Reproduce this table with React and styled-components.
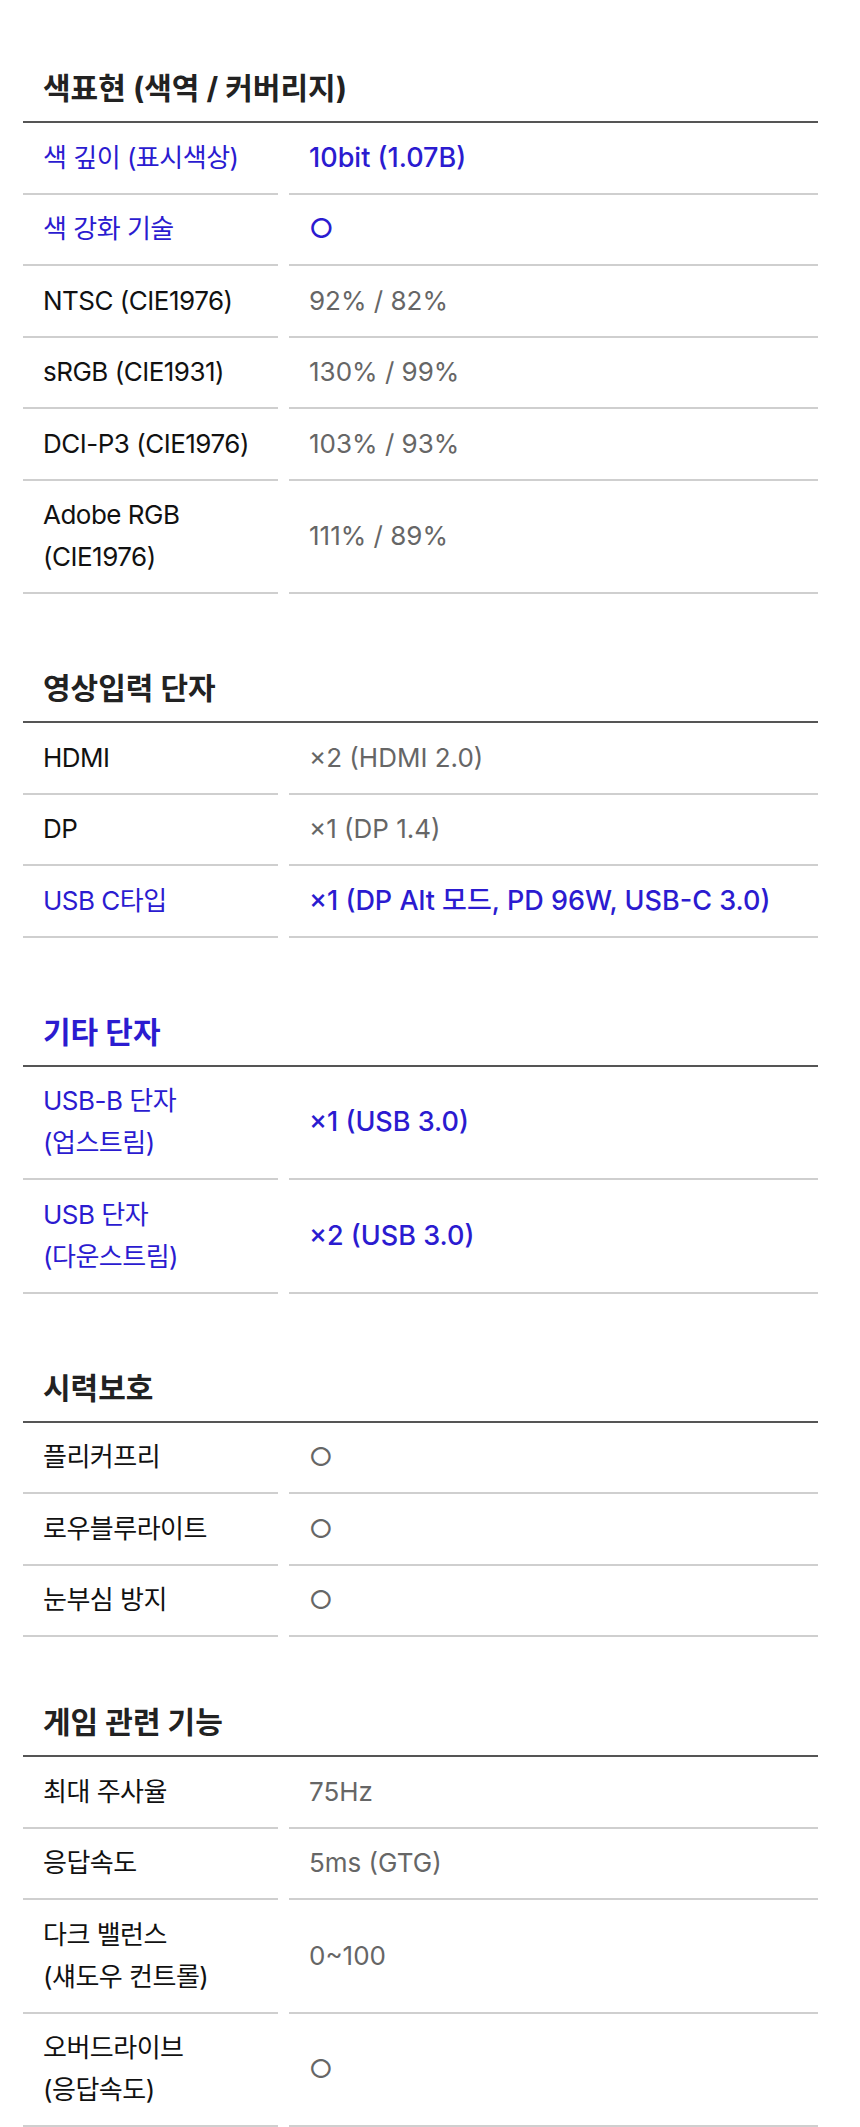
import React from 'react'
import styled, { createGlobalStyle } from 'styled-components'

const BLUE = '#2b1bd0'

const GlobalStyle = createGlobalStyle`
  body {
    margin: 0;
    background: #fff;
    font-family: Inter, "Noto Sans CJK KR", sans-serif;
  }
`

const Page = styled.div`
  width: 795px;
  padding: 66px 42px 0 23px;
`

const Section = styled.section`
  margin-top: ${p => p.$gap}px;
`

const Heading = styled.h3`
  margin: 0;
  padding: 0 20px 11px;
  font-size: 30px;
  font-weight: 700;
  line-height: 44px;
  color: ${p => (p.$accent ? BLUE : '#222')};
  border-bottom: 2px solid #555;
`

const Row = styled.div`
  display: grid;
  grid-template-columns: 255px 529px;
  column-gap: 11px;
`

const Cell = styled.div`
  display: flex;
  align-items: center;
  padding: 13.75px 20px;
  border-bottom: 2px solid #cfcfcf;
  font-size: 26px;
  line-height: 42px;
  white-space: pre-line;
`

const Label = styled(Cell)`
  letter-spacing: -0.5px;
  color: ${p => (p.$accent ? BLUE : '#111')};
`

const Value = styled(Cell)`
  color: ${p => (p.$accent ? BLUE : '#666')};
  font-size: ${p => (p.$accent ? 27 : 26)}px;
  font-weight: ${p => (p.$accent ? 500 : 400)};
`

const sections = [
  {
    title: '색표현 (색역 / 커버리지)',
    gap: 0,
    rows: [
      ['색 깊이 (표시색상)', '10bit (1.07B)', true],
      ['색 강화 기술', '○', true],
      ['NTSC (CIE1976)', '92% / 82%'],
      ['sRGB (CIE1931)', '130% / 99%'],
      ['DCI-P3 (CIE1976)', '103% / 93%'],
      ['Adobe RGB\n(CIE1976)', '111% / 89%'],
    ],
  },
  {
    title: '영상입력 단자',
    gap: 72,
    rows: [
      ['HDMI', '×2 (HDMI 2.0)'],
      ['DP', '×1 (DP 1.4)'],
      ['USB C타입', '×1 (DP Alt 모드, PD 96W, USB-C 3.0)', true],
    ],
  },
  {
    title: '기타 단자',
    gap: 72,
    accent: true,
    rows: [
      ['USB-B 단자\n(업스트림)', '×1 (USB 3.0)', true],
      ['USB 단자\n(다운스트림)', '×2 (USB 3.0)', true],
    ],
  },
  {
    title: '시력보호',
    gap: 72,
    rows: [
      ['플리커프리', '○'],
      ['로우블루라이트', '○'],
      ['눈부심 방지', '○'],
    ],
  },
  {
    title: '게임 관련 기능',
    gap: 63,
    rows: [
      ['최대 주사율', '75Hz'],
      ['응답속도', '5ms (GTG)'],
      ['다크 밸런스\n(섀도우 컨트롤)', '0~100'],
      ['오버드라이브\n(응답속도)', '○'],
    ],
  },
]

export default function App() {
  return (
    <Page>
      <GlobalStyle />
      {sections.map(s => (
        <Section key={s.title} $gap={s.gap}>
          <Heading $accent={s.accent}>{s.title}</Heading>
          {s.rows.map(([label, value, accent]) => (
            <Row key={label}>
              <Label $accent={accent}>{label}</Label>
              <Value $accent={accent}>{value}</Value>
            </Row>
          ))}
        </Section>
      ))}
    </Page>
  )
}
